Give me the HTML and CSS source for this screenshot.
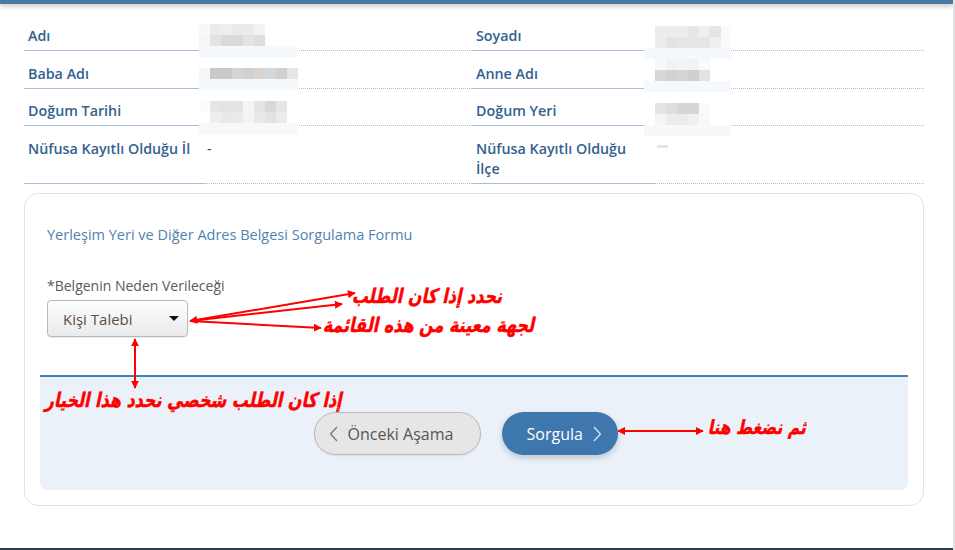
FILE: index.html
```html
<!DOCTYPE html>
<html lang="tr">
<head>
<meta charset="utf-8">
<title>Yerleşim Yeri ve Diğer Adres Belgesi Sorgulama</title>
<link rel="stylesheet" href="styles.css">
</head>
<body>
<div class="page">
  <div class="topbar"></div>

  <div class="info">
    <div class="cell label">Adı</div>
    <div class="cell value">
      <svg class="blur blur-left" width="100" height="48" viewBox="0 0 100 48">
        <rect x="0" y="10" width="11" height="11" fill="#f8f8f8"/><rect x="11" y="10" width="11" height="11" fill="#ececec"/><rect x="22" y="10" width="11" height="11" fill="#efefef"/><rect x="33" y="10" width="11" height="11" fill="#ebebeb"/><rect x="44" y="10" width="11" height="11" fill="#ebebeb"/><rect x="55" y="10" width="11" height="11" fill="#f3f3f3"/>
        <rect x="0" y="21" width="11" height="11" fill="#f6f6f6"/><rect x="11" y="21" width="11" height="11" fill="#e3e3e3"/><rect x="22" y="21" width="11" height="11" fill="#dadada"/><rect x="33" y="21" width="11" height="11" fill="#dadada"/><rect x="44" y="21" width="11" height="11" fill="#e4e4e4"/><rect x="55" y="21" width="11" height="11" fill="#dedede"/>
        <rect x="0" y="32" width="99" height="11" fill="#f6f9fc"/>
      </svg>
    </div>
    <div class="cell label">Soyadı</div>
    <div class="cell value">
      <svg class="blur blur-right" width="90" height="48" viewBox="0 0 90 48">
        <rect x="11" y="12" width="11" height="11" fill="#ededed"/><rect x="22" y="12" width="11" height="11" fill="#ececec"/><rect x="33" y="12" width="11" height="11" fill="#ececec"/><rect x="44" y="12" width="11" height="11" fill="#e5e7e8"/><rect x="55" y="12" width="11" height="11" fill="#efefef"/><rect x="66" y="12" width="11" height="11" fill="#e8e4e1"/><rect x="77" y="12" width="10" height="11" fill="#f8fafc"/>
        <rect x="11" y="23" width="11" height="11" fill="#ececec"/><rect x="22" y="23" width="11" height="11" fill="#e2e4e6"/><rect x="33" y="23" width="11" height="11" fill="#e6e6e6"/><rect x="44" y="23" width="11" height="11" fill="#e6e6e6"/><rect x="55" y="23" width="11" height="11" fill="#e6e6e6"/><rect x="66" y="23" width="11" height="11" fill="#efefef"/><rect x="77" y="23" width="10" height="11" fill="#f8fafc"/>
        <rect x="0" y="34" width="87" height="11" fill="#f6f9fc"/>
      </svg>
    </div>

    <div class="cell label">Baba Adı</div>
    <div class="cell value">
      <svg class="blur blur-left" width="100" height="48" viewBox="0 0 100 48">
        <rect x="0" y="17" width="11" height="11" fill="#f6f6f6"/><rect x="11" y="17" width="11" height="11" fill="#c9c9c9"/><rect x="22" y="17" width="11" height="11" fill="#c9c9c9"/><rect x="33" y="17" width="11" height="11" fill="#d4d4d4"/><rect x="44" y="17" width="11" height="11" fill="#d0d0d0"/><rect x="55" y="17" width="11" height="11" fill="#d9d4cc"/><rect x="66" y="17" width="11" height="11" fill="#d4d8dc"/><rect x="77" y="17" width="11" height="11" fill="#d0d0d0"/><rect x="88" y="17" width="11" height="11" fill="#e6e6e6"/>
        <rect x="0" y="28" width="99" height="11" fill="#f6f9fc"/>
      </svg>
    </div>
    <div class="cell label">Anne Adı</div>
    <div class="cell value">
      <svg class="blur blur-right" width="90" height="48" viewBox="0 0 90 48">
        <rect x="11" y="8" width="11" height="11" fill="#f8f8f8"/><rect x="22" y="8" width="11" height="11" fill="#f2f2f2"/><rect x="33" y="8" width="11" height="11" fill="#f4f4f4"/><rect x="44" y="8" width="11" height="11" fill="#f2f2f2"/><rect x="55" y="8" width="11" height="11" fill="#fafafa"/>
        <rect x="11" y="19" width="11" height="11" fill="#d8d8d8"/><rect x="22" y="19" width="11" height="11" fill="#d2d2d2"/><rect x="33" y="19" width="11" height="11" fill="#d6d6d6"/><rect x="44" y="19" width="11" height="11" fill="#cfcfcf"/><rect x="55" y="19" width="11" height="11" fill="#e0e2e4"/>
        <rect x="0" y="30" width="87" height="11" fill="#f6f9fc"/>
      </svg>
    </div>

    <div class="cell label">Doğum Tarihi</div>
    <div class="cell value">
      <svg class="blur blur-left" width="100" height="48" viewBox="0 0 100 48">
        <rect x="0" y="12" width="11" height="11" fill="#fcfcfc"/><rect x="11" y="12" width="11" height="11" fill="#e6e6e6"/><rect x="22" y="12" width="11" height="11" fill="#e3e3e3"/><rect x="33" y="12" width="11" height="11" fill="#e3e3e3"/><rect x="44" y="12" width="11" height="11" fill="#f4f4f4"/><rect x="55" y="12" width="11" height="11" fill="#e4e4e4"/><rect x="66" y="12" width="11" height="11" fill="#d8d8d8"/><rect x="77" y="12" width="11" height="11" fill="#e6e6e6"/>
        <rect x="11" y="23" width="11" height="11" fill="#eeeeee"/><rect x="22" y="23" width="11" height="11" fill="#e9e9e9"/><rect x="33" y="23" width="11" height="11" fill="#eaeaea"/><rect x="44" y="23" width="11" height="11" fill="#f4f4f4"/><rect x="55" y="23" width="11" height="11" fill="#e9e9e9"/><rect x="66" y="23" width="11" height="11" fill="#e2e2e2"/><rect x="77" y="23" width="11" height="11" fill="#ebebeb"/>
        <rect x="0" y="34" width="99" height="11" fill="#f6f9fc"/>
      </svg>
    </div>
    <div class="cell label">Doğum Yeri</div>
    <div class="cell value">
      <svg class="blur blur-right" width="90" height="48" viewBox="0 0 90 48">
        <rect x="11" y="14" width="11" height="11" fill="#e6e3e0"/><rect x="22" y="14" width="11" height="11" fill="#dcdfe2"/><rect x="33" y="14" width="11" height="11" fill="#d6d6d6"/><rect x="44" y="14" width="11" height="11" fill="#d6d6d6"/><rect x="55" y="14" width="11" height="11" fill="#fafbfc"/>
        <rect x="11" y="25" width="11" height="11" fill="#f6f4f4"/><rect x="22" y="25" width="11" height="11" fill="#ececec"/><rect x="33" y="25" width="11" height="11" fill="#ececec"/><rect x="44" y="25" width="11" height="11" fill="#f0f0f0"/><rect x="55" y="25" width="11" height="11" fill="#f8f8f8"/>
        <rect x="0" y="36" width="87" height="11" fill="#f6f9fc"/>
      </svg>
    </div>

    <div class="cell label">Nüfusa Kayıtlı Olduğu İl</div>
    <div class="cell value value-text">-</div>
    <div class="cell label">Nüfusa Kayıtlı Olduğu İlçe</div>
    <div class="cell value"><span class="dash"></span></div>
  </div>

  <div class="card">
    <div class="form">
      <div class="form-title">Yerleşim Yeri ve Diğer Adres Belgesi Sorgulama Formu</div>
      <div class="field-label">*Belgenin Neden Verileceği</div>
      <div class="select"><span>Kişi Talebi</span><span class="caret"></span></div>
    </div>
    <div class="actions">
      <div class="btn btn-prev">
        <svg class="chev" width="9" height="16" viewBox="0 0 9 16"><path d="M8 1 L1.5 8 L8 15" fill="none" stroke="#777" stroke-width="1.3"/></svg>
        <span>Önceki Aşama</span>
      </div>
      <div class="btn btn-next">
        <span>Sorgula</span>
        <svg class="chev" width="9" height="16" viewBox="0 0 9 16"><path d="M1 1 L7.5 8 L1 15" fill="none" stroke="#dbe6f1" stroke-width="1.3"/></svg>
      </div>
    </div>
  </div>

  <div class="bottombar"></div>

  <svg class="arrows" width="955" height="550" viewBox="0 0 955 550">
    <defs>
      <marker id="ah" viewBox="0 0 10 10" refX="9" refY="5" markerWidth="4" markerHeight="4" orient="auto-start-reverse">
        <path d="M0 0 L10 5 L0 10 Z" fill="#ff0000"/>
      </marker>
    </defs>
    <g stroke="#ff0000" stroke-width="2" fill="none">
      <line x1="190" y1="321" x2="355" y2="293" marker-start="url(#ah)" marker-end="url(#ah)"/>
      <line x1="190" y1="321" x2="342" y2="304" marker-end="url(#ah)"/>
      <line x1="190" y1="321" x2="321" y2="328" marker-end="url(#ah)"/>
      <line x1="135" y1="339" x2="135" y2="388" marker-start="url(#ah)" marker-end="url(#ah)"/>
      <line x1="618" y1="431" x2="703" y2="431" marker-start="url(#ah)" marker-end="url(#ah)"/>
    </g>
  </svg>

  <div class="note note-1" dir="rtl">نحدد إذا كان الطلب</div>
  <div class="note note-2" dir="rtl">لجهة معينة من هذه القائمة</div>
  <div class="note note-3" dir="rtl">إذا كان الطلب شخصي نحدد هذا الخيار</div>
  <div class="note note-4" dir="rtl">ثم نضغط هنا</div>
</div>
</body>
</html>
```

FILE: styles.css
```css
* { box-sizing: border-box; }

html, body {
  margin: 0;
  padding: 0;
  background: #ffffff;
}

body {
  font-family: "Open Sans", "Noto Sans", "DejaVu Sans", sans-serif;
  color: #333;
}

.page {
  position: relative;
  width: 955px;
  height: 550px;
  overflow: hidden;
  display: flex;
  flex-direction: column;
  border-right: 2px solid #e2e2e2;
}

.topbar {
  height: 4px;
  flex: none;
  background: #4878a4;
  box-shadow: 0 2px 5px rgba(0, 0, 0, 0.28);
}

/* ---------- info table ---------- */
.info {
  margin: 9.5px 0 0 24px;
  width: 900px;
  display: grid;
  grid-template-columns: 181px 267px 183px 269px;
}

.cell {
  padding: 12.5px 0 3.5px;
  line-height: 20.5px;
  font-size: 14.3px;
}

.label {
  padding-left: 4px;
  padding-right: 6px;
  color: #33628f;
  font-weight: 600;
  border-bottom: 1px solid #a3bfd9;
}

.value {
  padding-left: 2px;
  border-bottom: 1px dotted #a9c0d6;
}

.value-text {
  color: #444;
}

.blur {
  display: block;
  margin-top: -12.5px;
  margin-bottom: -15px;
}

.blur-left { margin-left: -8px; }
.blur-right { margin-left: -13px; }

.dash {
  display: inline-block;
  width: 11px;
  height: 3px;
  background: #e4e4e4;
  vertical-align: middle;
  margin-top: -6px;
}

/* ---------- card ---------- */
.card {
  margin: 9px 0 0 24px;
  width: 900px;
  border: 1px solid #e3e3e3;
  border-radius: 14px;
  padding: 0 15px 15px;
}

.form {
  padding: 31px 7px 38px;
}

.form-title {
  font-size: 14.5px;
  line-height: 20px;
  color: #4f83b2;
}

.field-label {
  margin-top: 31px;
  font-size: 14px;
  line-height: 20px;
  color: #5a5a5a;
}

.select {
  margin-top: 4px;
  width: 141px;
  height: 37px;
  border: 1px solid #b9b9b9;
  border-radius: 4px;
  background: linear-gradient(#fdfdfd, #e9ebec);
  box-shadow: 0 1px 1px rgba(0, 0, 0, 0.08);
  display: flex;
  align-items: center;
  justify-content: space-between;
  padding: 0 8px 0 15px;
  font-size: 15px;
  color: #5e4f40;
}

.caret {
  width: 0;
  height: 0;
  border-left: 5px solid transparent;
  border-right: 5px solid transparent;
  border-top: 5px solid #111;
}

.actions {
  border-top: 2px solid #3f7fba;
  background: #eaf1f9;
  border-radius: 0 0 7px 7px;
  height: 115px;
  padding: 35px 17px 0 0;
  display: flex;
  justify-content: center;
  gap: 21px;
  align-items: flex-start;
}

.btn {
  height: 43px;
  border-radius: 22px;
  display: flex;
  align-items: center;
  font-size: 16px;
}

.btn-prev {
  width: 167px;
  background: #e6e6e6;
  border: 1px solid #b9b9b9;
  color: #555;
  padding-left: 14px;
  gap: 10px;
  box-shadow: 0 1px 2px rgba(0, 0, 0, 0.08);
}

.btn-next {
  width: 116px;
  background: #3d77ad;
  color: #ffffff;
  padding-left: 25px;
  gap: 10px;
  box-shadow: 0 3px 6px rgba(0, 0, 0, 0.18);
}

.chev { display: block; flex: none; }

.bottombar {
  margin-top: auto;
  height: 2px;
  background: #2f3e48;
  flex: none;
}

/* ---------- annotations ---------- */
.arrows {
  position: absolute;
  left: 0;
  top: 0;
  pointer-events: none;
}

.note {
  position: absolute;
  white-space: nowrap;
  color: #ff0000;
  font-family: "DejaVu Sans", sans-serif;
  font-weight: bold;
  font-size: 16px;
  line-height: 20px;
  -webkit-text-stroke: 0.4px #ff0000;
  transform: skewX(-12deg) scaleY(1.25);
}

.note-1 { right: 450px; top: 287px; }
.note-2 { right: 418px; top: 316px; }
.note-3 { right: 610px; top: 391px; }
.note-4 { right: 146px; top: 418px; font-size: 15.5px; }
```
